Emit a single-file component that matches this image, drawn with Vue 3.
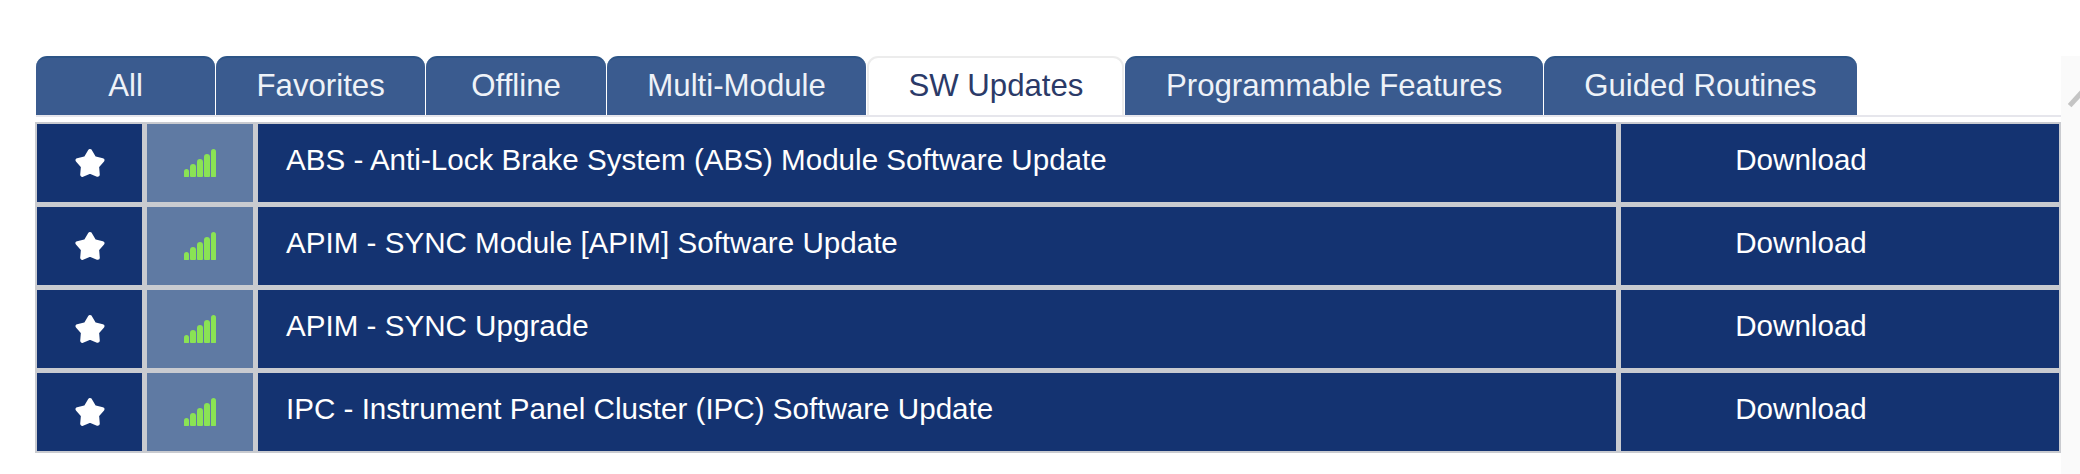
<script setup>
const tabs = [
	{ name: 'All', cls: 'tab-all' },
	{ name: 'Favorites' },
	{ name: 'Offline', cls: 'tab-offline' },
	{ name: 'Multi-Module' },
	{ name: 'SW Updates', active: true },
	{ name: 'Programmable Features' },
	{ name: 'Guided Routines' },
];

const rows = [
	'ABS - Anti-Lock Brake System (ABS) Module Software Update',
	'APIM - SYNC Module [APIM] Software Update',
	'APIM - SYNC Upgrade',
	'IPC - Instrument Panel Cluster (IPC) Software Update',
];

const bars = [8, 13, 18, 23, 28];
</script>

<template>
	<div class="page">
		<div class="side-strip">
			<div class="resize-mark"></div>
		</div>
		<div class="content">
			<div class="tabs">
				<div
					v-for="tab in tabs"
					:key="tab.name"
					class="tab"
					:class="[tab.cls, { active: tab.active }]"
				>
					{{ tab.name }}
				</div>
			</div>
			<div class="table">
				<div v-for="row in rows" :key="row" class="row">
					<div class="cell star-cell">
						<svg class="star" viewBox="0 -1 32 32">
							<polygon points="16,5 19.6,11 26.5,12.6 21.9,17.9 22.5,24.9 16,22.2 9.5,24.9 10.1,17.9 5.5,12.6 12.4,11" />
						</svg>
					</div>
					<div class="cell signal-cell">
						<div class="signal">
							<span
								v-for="bar in bars"
								:key="bar"
								class="bar"
								:style="{ height: bar + 'px' }"
							></span>
						</div>
					</div>
					<div class="cell name-cell">{{ row }}</div>
					<div class="cell action-cell">Download</div>
				</div>
			</div>
		</div>
	</div>
</template>

<style>
body {
	background: #ffffff;
}
</style>

<style scoped>
.page {
	width: 2080px;
	height: 474px;
	display: flex;
	overflow: hidden;
	position: relative;
	font-family: 'Liberation Sans', Arial, sans-serif;
	font-size: 29.6px;
}

.content {
	width: 2025px;
	padding: 56px 0 0 36px;
}

.tabs {
	display: flex;
	gap: 1px;
	height: 59px;
	border-bottom: 2px solid #e6e6ec;
	font-size: 31.2px;
}

.tab {
	height: 59px;
	padding: 0 40.5px 2px;
	box-sizing: border-box;
	display: flex;
	align-items: center;
	color: #eef2f8;
	background: #3a5b8f;
	border-top: 2px solid #2c5486;
	border-radius: 11px 11px 0 0;
}

.tab-all {
	width: 179px;
	justify-content: center;
	padding: 0 0 2px;
}

.tab-offline {
	padding: 0 45px 2px;
}

.tab.active {
	padding: 0 39px 2px;
	background: #ffffff;
	color: #2b3a68;
	border: 2px solid #ececec;
	border-bottom: none;
}

.table {
	display: flex;
	flex-direction: column;
	gap: 5px;
	margin-top: 5px;
	padding: 2px;
	margin-left: -1px;
	background: #c9cbd0;
}

.row {
	display: flex;
	gap: 5px;
	height: 78px;
}

.cell {
	display: flex;
	align-items: center;
	background: #143371;
	color: #ffffff;
}

.star-cell {
	width: 105px;
	justify-content: center;
}

.star {
	width: 38px;
	height: 38px;
	fill: #ffffff;
	stroke: #ffffff;
	stroke-width: 3.5;
	stroke-linejoin: round;
}

.signal-cell {
	width: 106px;
	justify-content: center;
	background: #5f7aa3;
}

.signal {
	display: flex;
	align-items: flex-end;
	gap: 1px;
	height: 28px;
}

.bar {
	width: 5.8px;
	background: #8ae354;
	border-radius: 3px 3px 1px 1px;
}

.name-cell {
	flex: 1;
	padding: 0 0 6px 28px;
}

.action-cell {
	width: 438px;
	justify-content: center;
	padding: 0 78px 6px 0;
	box-sizing: border-box;
}

.side-strip {
	position: absolute;
	top: 56px;
	right: 0;
	bottom: 0;
	width: 19px;
	background: #fafafa;
}

.resize-mark {
	position: absolute;
	top: 39px;
	left: 5px;
	width: 22px;
	height: 5px;
	background: #c4c4c4;
	transform: rotate(-48deg);
}
</style>
